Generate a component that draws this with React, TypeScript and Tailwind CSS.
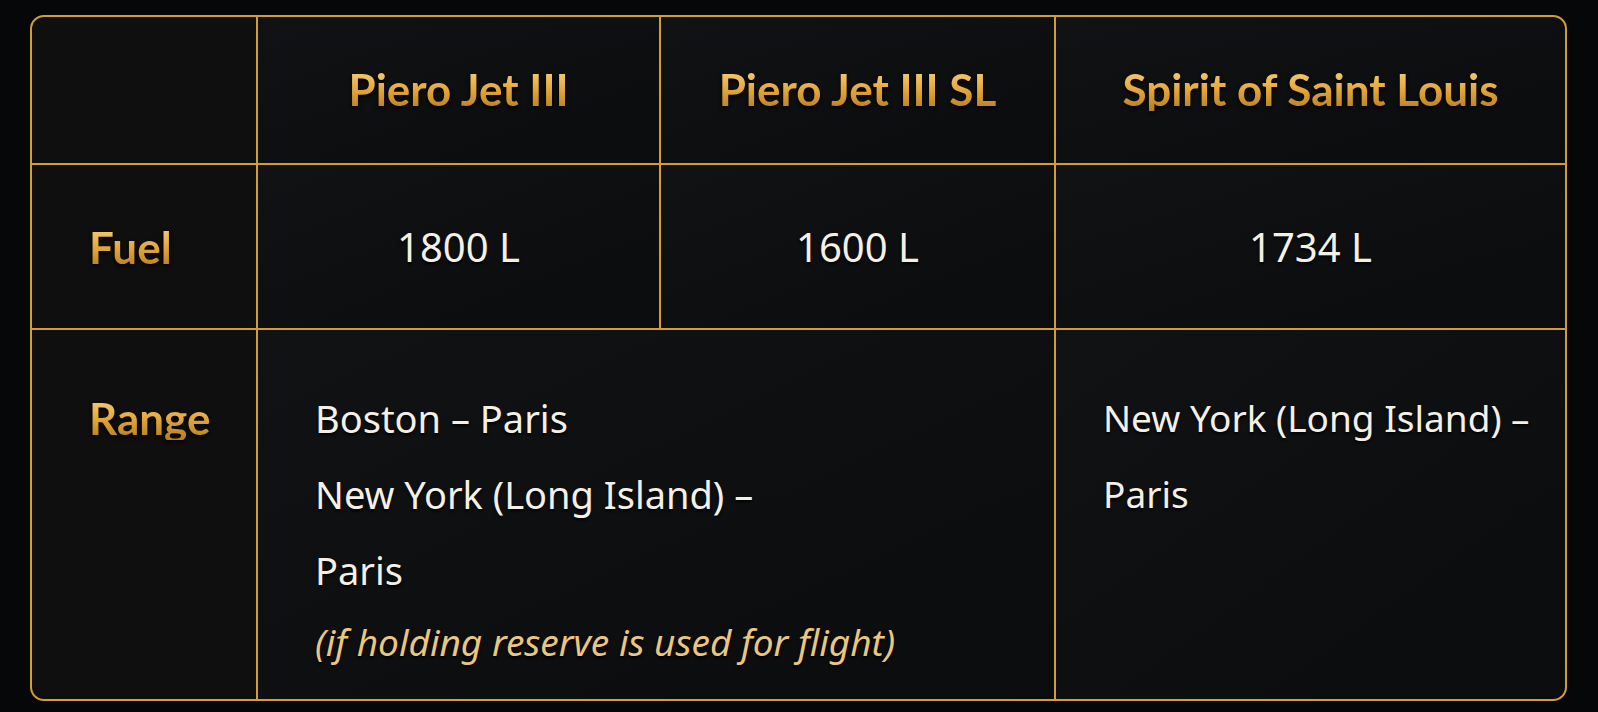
import React from "react";

const gold = "bg-gradient-to-b from-[#f8d27a] via-[#e6a83c] to-[#b57d1f] bg-clip-text text-transparent [filter:drop-shadow(0_2px_2px_rgba(0,0,0,0.9))]";

export default function App() {
  const cell = "bg-gradient-to-br from-[#111214] to-[#0b0c0d]";
  const labelCell = "bg-[#0f0f10]";
  const head = `font-['Lato',sans-serif] font-bold text-[44px] leading-none ${gold}`;
  const shadow = "[text-shadow:0_2px_3px_rgba(0,0,0,0.9)]";
  return (
    <div className="w-[1598px] h-[712px] bg-[#060708] pt-[15px] pl-[30px]">
      <div className="w-[1537px] h-[686px] rounded-[14px] border-2 border-[#d39d36] bg-[#d39d36] overflow-hidden grid grid-cols-[224px_401px_393px_509px] grid-rows-[146px_163px_369px] gap-[2px]">
        <div className={labelCell}></div>
        <div className={`${cell} flex items-center justify-center pb-[3px]`}>
          <span className={head}>Piero Jet III</span>
        </div>
        <div className={`${cell} flex items-center justify-center pb-[3px]`}>
          <span className={head}>Piero Jet III SL</span>
        </div>
        <div className={`${cell} flex items-center justify-center pb-[3px]`}>
          <span className={head}>Spirit of Saint Louis</span>
        </div>

        <div className={`${labelCell} flex items-center pl-[57px]`}>
          <span className={`${head} text-[43px]`}>Fuel</span>
        </div>
        {["1800 L", "1600 L", "1734 L"].map((v) => (
          <div key={v} className={`${cell} flex items-center justify-center`}>
            <span className={`font-['Noto_Sans',sans-serif] text-[40px] text-[#f4f0e6] ${shadow}`}>{v}</span>
          </div>
        ))}

        <div className={`${labelCell} pl-[57px] pt-[50px]`}>
          <div className="h-[76px] flex items-center">
            <span className={head}>Range</span>
          </div>
        </div>
        <div className={`${cell} col-span-2 pl-[57px] pt-[50px] font-['Noto_Sans',sans-serif] text-[38px] leading-[76px] text-[#f4f0e6] ${shadow}`}>
          <div>Boston – Paris</div>
          <div>New York (Long Island) –</div>
          <div>Paris</div>
          <div className="italic text-[37px] leading-[67px] text-[#ebc67e]">
            (if holding reserve is used for flight)
          </div>
        </div>
        <div className={`${cell} pl-[47px] pt-[50px] font-['Noto_Sans',sans-serif] text-[37px] leading-[76px] text-[#f4f0e6] ${shadow}`}>
          <div>New York (Long Island) –</div>
          <div>Paris</div>
        </div>
      </div>
    </div>
  );
}
